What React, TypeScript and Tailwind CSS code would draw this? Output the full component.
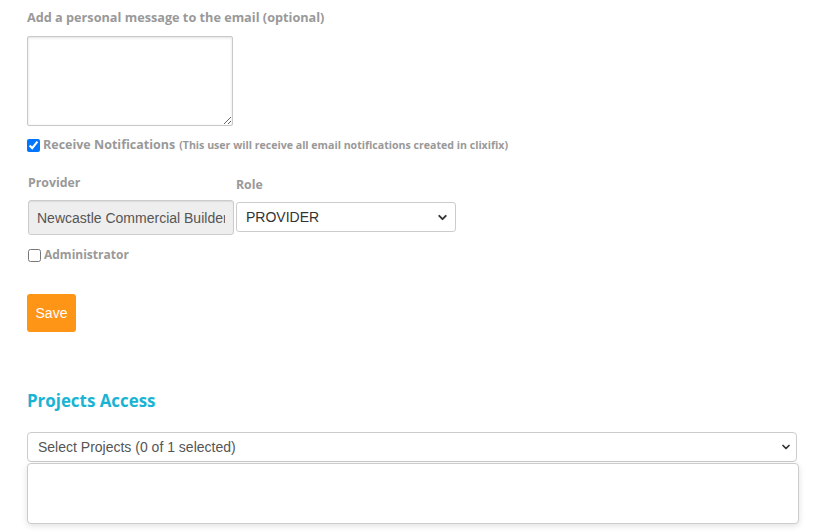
import { ChevronDown } from "lucide-react";

export default function App() {
  return (
    <div className="w-[813px] h-[532px] overflow-hidden bg-white pl-[27px] pt-[8px] font-['Open_Sans',sans-serif] text-[#999]">
      <label className="block text-[12.7px] font-bold leading-[18px]">Add a personal message to the email (optional)</label>
      <textarea className="mt-[10px] block h-[90px] w-[206px] rounded-[2px] border border-[#c8c8c8] shadow-[inset_0_1px_3px_rgba(0,0,0,0.12)] outline-none" />

      <div className="mt-[12px] flex items-center leading-[14px]">
        <input type="checkbox" defaultChecked className="m-0 h-[13px] w-[13px] accent-[#0075ff]" />
        <span className="ml-[3px] text-[12.5px] font-bold">Receive Notifications</span>
        <span className="ml-[4px] text-[10.6px] font-bold">(This user will receive all email notifications created in clixifix)</span>
      </div>

      <div className="mt-[23px] flex">
        <div className="w-[207px] pl-[1px]">
          <label className="block text-[12.3px] font-bold leading-[16px]">Provider</label>
          <input
            readOnly
            value="Newcastle Commercial Builders Ltd"
            className="mt-[9px] block h-[35px] w-full rounded-[3px] border border-[#ccc] bg-[#eee] px-[8px] font-['Liberation_Sans',sans-serif] text-[14px] text-[#555] shadow-[inset_0_1px_1px_rgba(0,0,0,0.08)] outline-none"
          />
        </div>
        <div className="ml-[2px] pt-[2px]">
          <label className="block text-[12.3px] font-bold leading-[16px]">Role</label>
          <div className="mt-[9px] flex h-[30px] w-[220px] items-center justify-between rounded-[3px] border border-[#ccc] bg-white pl-[9px] pr-[6px] font-['Liberation_Sans',sans-serif] text-[14px] text-[#333]">
            <span>PROVIDER</span>
            <ChevronDown size={13} strokeWidth={3.5} className="text-[#333]" />
          </div>
        </div>
      </div>

      <div className="mt-[13px] flex items-center pl-[1px] leading-[14px]">
        <input type="checkbox" className="m-0 h-[13px] w-[13px]" />
        <span className="ml-[3px] text-[12px] font-bold">Administrator</span>
      </div>

      <button className="mt-[32px] flex h-[38px] w-[49px] items-center justify-center rounded-[3px] bg-[#ff9517] font-['Liberation_Sans',sans-serif] text-[14px] text-white">
        Save
      </button>

      <h3 className="mt-[59px] text-[16.9px] font-bold leading-[20px] text-[#19b4d3]">Projects Access</h3>

      <div className="mt-[21px] w-[770px]">
        <div className="flex h-[30px] items-center justify-between rounded-[4px] border border-[#ccc] bg-white pl-[10px] pr-[4px] font-['Liberation_Sans',sans-serif] text-[14px] text-[#555]">
          <span>Select Projects (0 of 1 selected)</span>
          <ChevronDown size={12} strokeWidth={3.5} className="text-[#333]" />
        </div>
        <div className="mt-[1px] h-[61px] w-[772px] rounded-[4px] border border-[#ccc] bg-white shadow-[0_2px_6px_rgba(0,0,0,0.12)]" />
      </div>
    </div>
  );
}
